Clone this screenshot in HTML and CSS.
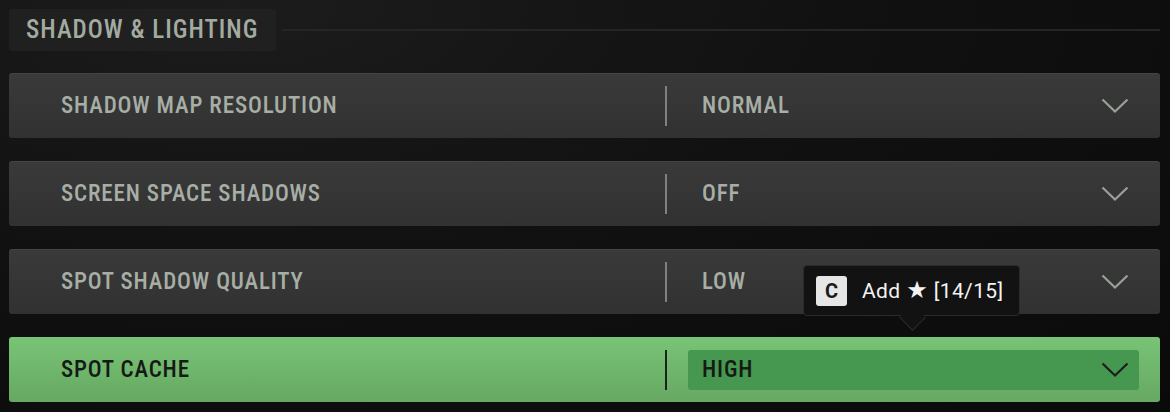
FILE: index.html
```html
<!DOCTYPE html>
<html lang="en">
<head>
    <meta charset="UTF-8">
    <title>Shadow &amp; Lighting</title>
    <link rel="stylesheet" href="styles.css">
</head>
<body>
    <div class="settings">
        <header class="group-head">
            <h2 class="group-tab">SHADOW &amp; LIGHTING</h2>
            <div class="group-line"></div>
        </header>

        <div class="row">
            <div class="label">SHADOW MAP RESOLUTION</div>
            <div class="divider"></div>
            <div class="value">
                <span>NORMAL</span>
                <svg class="chevron" viewBox="0 0 28 16"><polyline points="1.5,1.5 14,13.5 26.5,1.5"/></svg>
            </div>
        </div>

        <div class="row">
            <div class="label">SCREEN SPACE SHADOWS</div>
            <div class="divider"></div>
            <div class="value">
                <span>OFF</span>
                <svg class="chevron" viewBox="0 0 28 16"><polyline points="1.5,1.5 14,13.5 26.5,1.5"/></svg>
            </div>
        </div>

        <div class="row">
            <div class="label">SPOT SHADOW QUALITY</div>
            <div class="divider"></div>
            <div class="value">
                <span>LOW</span>
                <svg class="chevron" viewBox="0 0 28 16"><polyline points="1.5,1.5 14,13.5 26.5,1.5"/></svg>
            </div>
            <div class="tooltip">
                <span class="key">C</span>
                <span class="tip-text">Add <span class="star">★</span> [14/15]</span>
            </div>
        </div>

        <div class="row active">
            <div class="label">SPOT CACHE</div>
            <div class="divider"></div>
            <div class="value">
                <span>HIGH</span>
                <svg class="chevron" viewBox="0 0 28 16"><polyline points="1.5,1.5 14,13.5 26.5,1.5"/></svg>
            </div>
        </div>
    </div>
</body>
</html>
```

FILE: styles.css
```css
* {
    margin: 0;
    padding: 0;
    box-sizing: border-box;
}
body {
    width: 1170px;
    height: 412px;
    overflow: hidden;
    font-family: Roboto, "DejaVu Sans", sans-serif;
    background: radial-gradient(ellipse at 20% 0%, #1c1c1c 0%, #111 45%, #0a0a0a 100%);
    color: #a7aea5;
}
.settings {
    padding: 9px 10px 0 9px;
}
.group-head {
    display: flex;
    align-items: center;
    height: 42px;
}
.group-tab {
    width: 267px;
    height: 42px;
    padding-left: 17px;
    background: #202020;
    border-radius: 3px;
    font-size: 25px;
    font-weight: 500;
    font-stretch: 85%;
    letter-spacing: 1px;
    line-height: 42px;
    color: #a3aba1;
}
.group-line {
    flex: 1;
    height: 2px;
    margin-left: 6px;
    background: #252525;
}
.row {
    position: relative;
    display: flex;
    align-items: center;
    height: 65px;
    margin-top: 23px;
    background: linear-gradient(#3a3a3a, #313131);
    border-radius: 3px;
    box-shadow: inset 0 1px 0 rgba(255, 255, 255, 0.05);
}
.group-head + .row {
    margin-top: 22px;
}
.label {
    flex: 0 0 656px;
    padding-left: 52px;
    font-size: 23px;
    font-weight: 500;
    font-stretch: 85%;
    letter-spacing: 0.85px;
}
.divider {
    width: 2px;
    height: 40px;
    background: #7c837b;
}
.value {
    flex: 1;
    display: flex;
    align-items: center;
    justify-content: space-between;
    height: 40px;
    margin: 0 21px;
    padding: 0 10px 0 14px;
    border-radius: 3px;
    font-size: 23px;
    font-weight: 500;
    font-stretch: 85%;
    letter-spacing: 0.85px;
}
.chevron {
    width: 28px;
    height: 16px;
    fill: none;
    stroke: #9aa198;
    stroke-width: 2.2;
}
.row.active {
    background: linear-gradient(#78c476, #67a862);
    color: #151a15;
    box-shadow: none;
}
.row.active .divider {
    background: #1d221d;
}
.row.active .value {
    background: #46974f;
}
.row.active .chevron {
    stroke: #1a1f1a;
}
.tooltip {
    position: absolute;
    left: 794px;
    top: 16px;
    z-index: 2;
    display: flex;
    align-items: center;
    gap: 15px;
    width: 217px;
    height: 51px;
    padding-left: 12px;
    background: #121212;
    border: 1px solid #2b2b2b;
    border-radius: 4px;
    color: #f2f2f2;
}
.tooltip::after {
    content: "";
    position: absolute;
    left: 50%;
    bottom: -12px;
    width: 18px;
    height: 18px;
    margin-left: -9px;
    background: #121212;
    border-right: 1px solid #2b2b2b;
    border-bottom: 1px solid #2b2b2b;
    transform: rotate(45deg);
    z-index: -1;
}
.key {
    width: 31px;
    height: 30px;
    background: #e6e6e6;
    border-radius: 3px;
    color: #1a1a1a;
    font-size: 20px;
    font-weight: 700;
    line-height: 30px;
    text-align: center;
}
.tip-text {
    font-size: 21px;
    letter-spacing: 0.4px;
    white-space: nowrap;
}
.star {
    font-family: "DejaVu Sans", sans-serif;
    font-size: 24px;
    line-height: 1;
}
```
